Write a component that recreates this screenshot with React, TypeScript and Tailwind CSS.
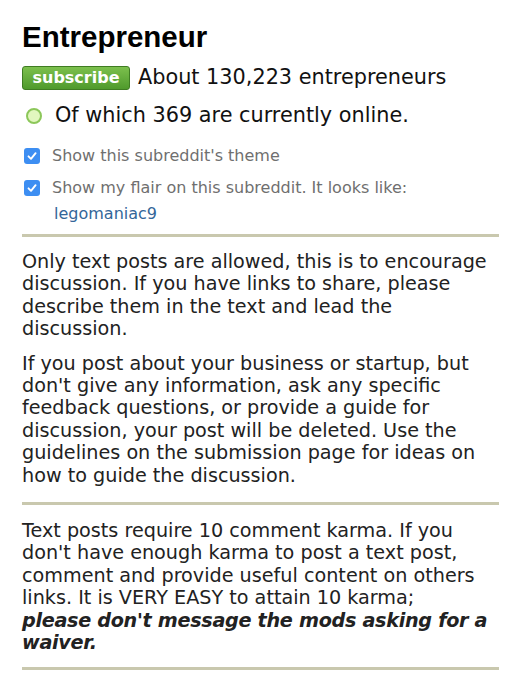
import React from "react";

const verdana = { fontFamily: '"DejaVu Sans", Verdana, sans-serif' };

function Check() {
  return (
    <span className="flex h-[16px] w-[16px] shrink-0 items-center justify-center rounded-[3px] bg-[#3d8ef2]">
      <svg width="12" height="12" viewBox="0 0 12 12" fill="none">
        <path d="M2.5 6.3 L5 8.8 L9.6 3.2" stroke="white" strokeWidth="1.9" strokeLinecap="round" strokeLinejoin="round" />
      </svg>
    </span>
  );
}

function Sep() {
  return <div className="h-[3px] w-full bg-[#c9c8ae]" />;
}

export default function App() {
  return (
    <div className="min-h-[687px] bg-white pl-[22px] pr-[21px] pt-[22px] text-[#222]" style={verdana}>
      <h1
        className="text-[29.5px] font-bold leading-[30px] text-black"
        style={{ fontFamily: '"Liberation Sans", Arial, sans-serif' }}
      >
        Entrepreneur
      </h1>
      <div className="mt-[14px] flex h-[24px] items-center gap-[8px]">
        <span className="flex h-[24px] w-[108px] items-center justify-center rounded-[3px] border border-[#3f7c22] bg-gradient-to-b from-[#7cc04d] to-[#4f9a2c] text-[16px] font-bold text-white">
          subscribe
        </span>
        <span className="text-[20.8px] text-[#111]">About 130,223 entrepreneurs</span>
      </div>
      <div className="mt-[14px] flex h-[24px] items-center gap-[13px] pl-[4px]">
        <span className="h-[16px] w-[16px] shrink-0 rounded-full border-[2.5px] border-[#8cc75a] bg-[#e2f7bf]" />
        <span className="text-[20.8px] text-[#111]">Of which 369 are currently online.</span>
      </div>
      <div className="mt-[18px] flex h-[20px] items-center gap-[12px] pl-[2px] text-[16px] text-[#6f6f6f]">
        <Check />
        <span>Show this subreddit's theme</span>
      </div>
      <div className="mt-[12px] flex h-[20px] items-center gap-[12px] pl-[2px] text-[16px] text-[#6f6f6f]">
        <Check />
        <span>Show my flair on this subreddit. It looks like:</span>
      </div>
      <div className="mt-[6px] h-[20px] pl-[32px] text-[16px] leading-[20px] text-[#336699]">legomaniac9</div>
      <div className="mt-[10px]">
        <Sep />
      </div>
      <div className="mt-[14px] text-[19.2px] leading-[22.4px] text-[#222]">
        <p>
          Only text posts are allowed, this is to encourage
          <br />
          discussion. If you have links to share, please
          <br />
          describe them in the text and lead the
          <br />
          discussion.
        </p>
        <p className="mt-[12px]">
          If you post about your business or startup, but
          <br />
          don't give any information, ask any specific
          <br />
          feedback questions, or provide a guide for
          <br />
          discussion, your post will be deleted. Use the
          <br />
          guidelines on the submission page for ideas on
          <br />
          how to guide the discussion.
        </p>
      </div>
      <div className="mt-[15px]">
        <Sep />
      </div>
      <div className="mt-[15px] text-[19.2px] leading-[22.4px] text-[#222]">
        <p>
          Text posts require 10 comment karma. If you
          <br />
          don't have enough karma to post a text post,
          <br />
          comment and provide useful content on others
          <br />
          links. It is VERY EASY to attain 10 karma;
          <br />
          <strong className="font-bold italic tracking-[-0.3px]">
            please don't message the mods asking for a
            <br />
            waiver.
          </strong>
        </p>
      </div>
      <div className="mt-[12px]">
        <Sep />
      </div>
    </div>
  );
}
